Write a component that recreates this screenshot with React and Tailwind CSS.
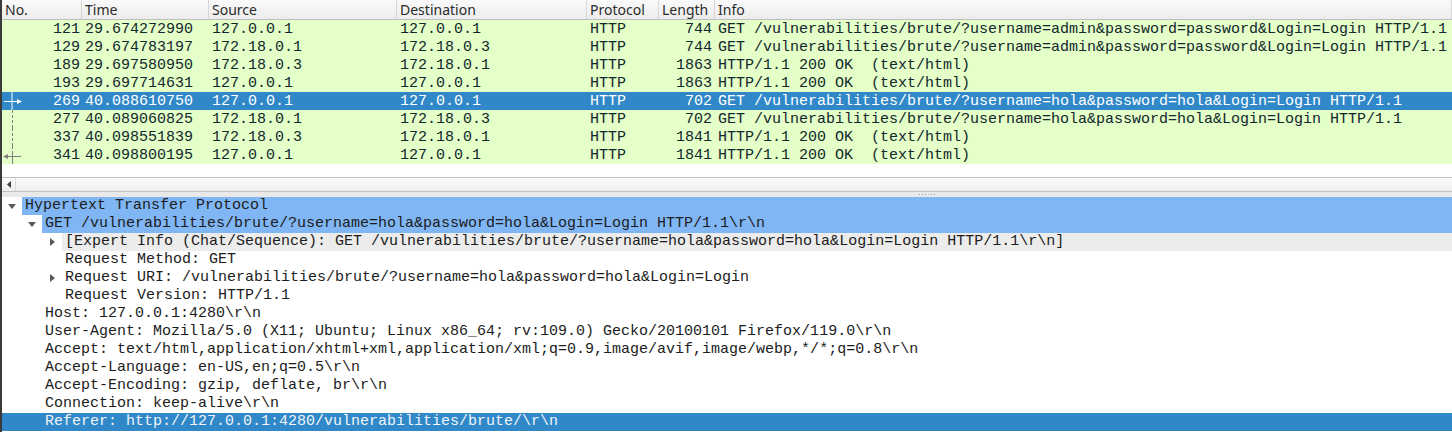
import React from 'react';

const mono = { fontFamily: '"Liberation Mono", "DejaVu Sans Mono", monospace' };

const packets = [
  { no: 121, time: '29.674272990', src: '127.0.0.1', dst: '127.0.0.1', proto: 'HTTP', len: 744, info: 'GET /vulnerabilities/brute/?username=admin&password=password&Login=Login HTTP/1.1' },
  { no: 129, time: '29.674783197', src: '172.18.0.1', dst: '172.18.0.3', proto: 'HTTP', len: 744, info: 'GET /vulnerabilities/brute/?username=admin&password=password&Login=Login HTTP/1.1' },
  { no: 189, time: '29.697580950', src: '172.18.0.3', dst: '172.18.0.1', proto: 'HTTP', len: 1863, info: 'HTTP/1.1 200 OK  (text/html)' },
  { no: 193, time: '29.697714631', src: '127.0.0.1', dst: '127.0.0.1', proto: 'HTTP', len: 1863, info: 'HTTP/1.1 200 OK  (text/html)' },
  { no: 269, time: '40.088610750', src: '127.0.0.1', dst: '127.0.0.1', proto: 'HTTP', len: 702, info: 'GET /vulnerabilities/brute/?username=hola&password=hola&Login=Login HTTP/1.1', selected: true, graph: 'start' },
  { no: 277, time: '40.089060825', src: '172.18.0.1', dst: '172.18.0.3', proto: 'HTTP', len: 702, info: 'GET /vulnerabilities/brute/?username=hola&password=hola&Login=Login HTTP/1.1', graph: 'mid' },
  { no: 337, time: '40.098551839', src: '172.18.0.3', dst: '172.18.0.1', proto: 'HTTP', len: 1841, info: 'HTTP/1.1 200 OK  (text/html)', graph: 'mid' },
  { no: 341, time: '40.098800195', src: '127.0.0.1', dst: '127.0.0.1', proto: 'HTTP', len: 1841, info: 'HTTP/1.1 200 OK  (text/html)', graph: 'end' },
];

const details = [
  { level: 0, arrow: 'down', text: 'Hypertext Transfer Protocol', hl: 'related' },
  { level: 1, arrow: 'down', text: 'GET /vulnerabilities/brute/?username=hola&password=hola&Login=Login HTTP/1.1\\r\\n', hl: 'related' },
  { level: 2, arrow: 'right', text: '[Expert Info (Chat/Sequence): GET /vulnerabilities/brute/?username=hola&password=hola&Login=Login HTTP/1.1\\r\\n]', hl: 'expert' },
  { level: 2, text: 'Request Method: GET' },
  { level: 2, arrow: 'right', text: 'Request URI: /vulnerabilities/brute/?username=hola&password=hola&Login=Login' },
  { level: 2, text: 'Request Version: HTTP/1.1' },
  { level: 1, text: 'Host: 127.0.0.1:4280\\r\\n' },
  { level: 1, text: 'User-Agent: Mozilla/5.0 (X11; Ubuntu; Linux x86_64; rv:109.0) Gecko/20100101 Firefox/119.0\\r\\n' },
  { level: 1, text: 'Accept: text/html,application/xhtml+xml,application/xml;q=0.9,image/avif,image/webp,*/*;q=0.8\\r\\n' },
  { level: 1, text: 'Accept-Language: en-US,en;q=0.5\\r\\n' },
  { level: 1, text: 'Accept-Encoding: gzip, deflate, br\\r\\n' },
  { level: 1, text: 'Connection: keep-alive\\r\\n' },
  { level: 1, text: 'Referer: http://127.0.0.1:4280/vulnerabilities/brute/\\r\\n', hl: 'selected' },
];

const cols = 'grid grid-cols-[80px_127px_188px_190px_72px_56px_1fr]';

function Graph({ kind }) {
  if (kind === 'start') {
    return (
      <svg className="absolute left-0 top-[-1px]" width="24" height="18" viewBox="0 0 24 18">
        <line x1="10" y1="0" x2="10" y2="18" stroke="#fff" strokeWidth="1" />
        <line x1="2" y1="9.5" x2="15" y2="9.5" stroke="#fff" strokeWidth="1" />
        <polygon points="15,7 20,9.5 15,12" fill="#fff" />
      </svg>
    );
  }
  if (kind === 'mid') {
    return (
      <svg className="absolute left-0 top-[-1px]" width="24" height="18" viewBox="0 0 24 18">
        <line x1="10.5" y1="0" x2="10.5" y2="18" stroke="#808080" strokeWidth="1" strokeDasharray="3 2" />
      </svg>
    );
  }
  return (
    <svg className="absolute left-0 top-[-1px]" width="24" height="18" viewBox="0 0 24 18">
      <line x1="10.5" y1="0" x2="10.5" y2="5" stroke="#808080" strokeWidth="1" strokeDasharray="3 2" />
      <line x1="10.5" y1="5" x2="10.5" y2="18" stroke="#808080" strokeWidth="1" />
      <line x1="5" y1="10.5" x2="19" y2="10.5" stroke="#808080" strokeWidth="1" />
      <polygon points="6,8 1,10.5 6,13" fill="#808080" />
    </svg>
  );
}

function Arrow({ dir }) {
  if (dir === 'down') {
    return (
      <svg width="8" height="5" viewBox="0 0 8 5">
        <polygon points="0,0 8,0 4,5" fill="#5a5a5a" />
      </svg>
    );
  }
  return (
    <svg width="5" height="8" viewBox="0 0 5 8">
      <polygon points="0,0 5,4 0,8" fill="#5a5a5a" />
    </svg>
  );
}

function PacketRow({ p }) {
  const sel = p.selected;
  return (
    <div
      className={`${cols} box-border h-[18px] pt-[1px] leading-[18px] text-[15px] whitespace-pre ${sel ? 'bg-[#3088c8] text-white' : 'bg-[#e4ffc7] text-[#12272e]'}`}
      style={mono}
    >
      <div className="relative pr-[2px] text-right">
        {p.graph && <Graph kind={p.graph} />}
        <span className="relative">{p.no}</span>
      </div>
      <div className="px-[3px] overflow-hidden">{p.time}</div>
      <div className="px-[3px] overflow-hidden">{p.src}</div>
      <div className="px-[3px] overflow-hidden">{p.dst}</div>
      <div className="px-[3px] overflow-hidden">{p.proto}</div>
      <div className="px-[3px] text-right overflow-hidden">{p.len}</div>
      <div className="px-[3px] overflow-hidden">{p.info}</div>
    </div>
  );
}

function DetailRow({ d }) {
  const selected = d.hl === 'selected';
  const textBg =
    d.hl === 'related' ? 'bg-[#80b6f4]' : d.hl === 'expert' ? 'bg-[#ececec]' : '';
  return (
    <div
      className={`flex h-[18px] leading-[18px] text-[15px] whitespace-pre ${selected ? 'bg-[#3088c8] text-[#eef4fa]' : 'text-[#1c1c1c]'}`}
      style={mono}
    >
      <div style={{ width: d.level * 20 }} className="shrink-0" />
      <div className="w-[20px] shrink-0 flex items-center justify-center">
        {d.arrow && <Arrow dir={d.arrow} />}
      </div>
      <div className={`flex-1 pl-[3px] overflow-hidden ${textBg}`}>{d.text}</div>
    </div>
  );
}

export default function App() {
  const headers = ['No.', 'Time', 'Source', 'Destination', 'Protocol', 'Length', 'Info'];
  return (
    <div className="w-[1452px] h-[432px] overflow-hidden bg-white border-l-2 border-[#3a3a3a] flex flex-col">
      {/* packet list */}
      <div className="h-[177px] shrink-0 flex flex-col">
        <div
          className={`${cols} h-[20px] shrink-0 bg-gradient-to-b from-[#fafafa] to-[#ececec] border-b border-[#bdbdbd] text-[14px] leading-[19px] text-[#2b2b2b]`}
          style={{ fontFamily: '"Noto Sans", "Open Sans", sans-serif' }}
        >
          {headers.map((h) => (
            <div key={h} className="px-[3px] border-r border-[#d6d6d6] overflow-hidden">
              {h}
            </div>
          ))}
        </div>
        {packets.map((p) => (
          <PacketRow key={p.no} p={p} />
        ))}
      </div>

      {/* horizontal scrollbar */}
      <div className="h-[15px] shrink-0 flex border-t border-b border-[#c2c2c2] bg-gradient-to-b from-[#fbfbfb] to-[#eeeeee]">
        <div className="w-[14px] flex items-center justify-center border-r border-[#dcdcdc]">
          <svg width="4" height="7" viewBox="0 0 4 7">
            <polygon points="4,0 0,3.5 4,7" fill="#3c3c3c" />
          </svg>
        </div>
      </div>

      {/* splitter */}
      <div className="h-[5px] shrink-0 bg-[#e9e9e9] flex items-center pl-[917px] gap-[2px]">
        {[0, 1, 2, 3, 4, 5].map((i) => (
          <div key={i} className="w-[1px] h-[1px] bg-[#a0a0a0]" />
        ))}
      </div>

      {/* packet details */}
      <div className="flex-1 flex flex-col">
        {details.map((d, i) => (
          <DetailRow key={i} d={d} />
        ))}
      </div>
    </div>
  );
}
